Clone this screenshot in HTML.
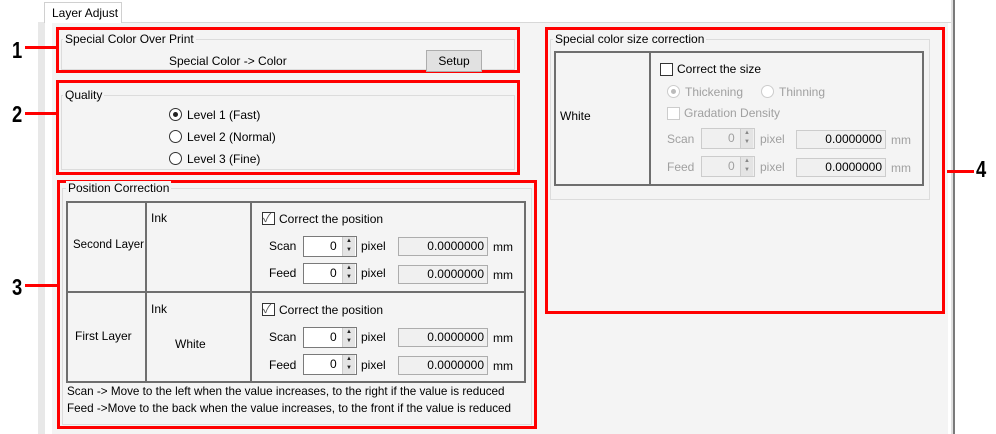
<!DOCTYPE html>
<html><head><style>
*{margin:0;padding:0;box-sizing:border-box}
body{width:996px;height:434px;background:#fff;position:relative;overflow:hidden;font-family:"Liberation Sans","Noto Sans CJK JP",sans-serif;font-size:12px;color:#000}
div,span{position:absolute}
.t{white-space:nowrap;line-height:14px}
.red{border:3px solid #f00}
.grp{border:1px solid #dcdcdc}
.gl{background:#f4f4f4;padding:0 2px}
.cell{border:2px solid #6e6e6e}
.num{font-size:23px;font-weight:bold;transform:scaleX(.8);transform-origin:left top;line-height:22px}
.ln{height:3px;background:#f00}
.cb{width:13px;height:13px;border:1px solid #333;background:#fff}
.rb{width:13px;height:13px;border:1px solid #333;border-radius:50%;background:#fff}
.in{height:21px;border:1px solid #7a7a7a;background:#fff}
.mmf{height:19px;border:1px solid #adadad;background:#f0f0f0;text-align:right;padding-right:3px;line-height:17px}
.sp{width:13px;height:19px;background:#e4e4e4;border-left:1px solid #ccc;font-size:6px;line-height:9px;text-align:center;color:#222}
.dis{color:#a0a0a0}
</style></head><body>
<div style="left:38px;top:22px;width:7px;height:412px;background:#e8e8e8"></div>
<div style="left:52px;top:22px;width:896px;height:412px;background:#f4f4f4"></div>
<div style="left:45px;top:22px;width:910px;height:1px;background:#d8d8d8"></div>
<div style="left:951px;top:0;width:2px;height:434px;background:#e0e0e0"></div>
<div style="left:953px;top:0;width:2px;height:434px;background:#7a7a7a"></div>
<div style="left:44px;top:2px;width:78px;height:21px;background:#fff;border:1px solid #d0d0d0;border-bottom:none"></div>
<div class="t" style="left:52px;top:6px">Layer Adjust</div>

<div class="num" style="left:12px;top:39px">1</div><div class="ln" style="left:25px;top:46px;width:31px"></div>
<div class="num" style="left:12px;top:103px">2</div><div class="ln" style="left:25px;top:112px;width:31px"></div>
<div class="num" style="left:12px;top:276px">3</div><div class="ln" style="left:25px;top:284px;width:32px"></div>
<div class="num" style="left:976px;top:158px">4</div><div class="ln" style="left:947px;top:170px;width:27px"></div>

<div class="red" style="left:56px;top:27px;width:464px;height:46px"></div>
<div class="grp" style="left:61px;top:39px;width:454px;height:31px"></div>
<div class="t gl" style="left:63px;top:32px">Special Color Over Print</div>
<div class="t" style="left:169px;top:54px">Special Color -&gt; Color</div>
<div style="left:426px;top:50px;width:56px;height:22px;background:#e1e1e1;border:1px solid #adadad;text-align:center;line-height:20px">Setup</div>

<div class="red" style="left:56px;top:80px;width:464px;height:95px"></div>
<div class="grp" style="left:61px;top:95px;width:454px;height:75px"></div>
<div class="t gl" style="left:63px;top:88px">Quality</div>
<div class="rb" style="left:169px;top:108px"></div><div style="left:173px;top:112px;width:5px;height:5px;border-radius:50%;background:#222"></div>
<div class="t" style="left:187px;top:108px">Level 1 (Fast)</div>
<div class="rb" style="left:169px;top:130px"></div><div class="t" style="left:187px;top:130px">Level 2 (Normal)</div>
<div class="rb" style="left:169px;top:152px"></div><div class="t" style="left:187px;top:152px">Level 3 (Fine)</div>

<div class="red" style="left:57px;top:180px;width:480px;height:249px"></div>
<div class="grp" style="left:62px;top:188px;width:470px;height:237px"></div>
<div class="t gl" style="left:66px;top:181px">Position Correction</div>
<div class="cell" style="left:66px;top:201px;width:81px;height:92px"></div>
<div class="cell" style="left:145px;top:201px;width:107px;height:92px"></div>
<div class="cell" style="left:250px;top:201px;width:276px;height:92px"></div>
<div class="cell" style="left:66px;top:291px;width:81px;height:92px"></div>
<div class="cell" style="left:145px;top:291px;width:107px;height:92px"></div>
<div class="cell" style="left:250px;top:291px;width:276px;height:92px"></div>
<div class="t" style="left:73px;top:238px;font-size:11.5px">Second Layer</div>
<div class="t" style="left:151px;top:211px">Ink</div>
<div class="t" style="left:75px;top:329px">First Layer</div>
<div class="t" style="left:151px;top:302px">Ink</div>
<div class="t" style="left:175px;top:337px">White</div>

<div class="cb" style="left:262px;top:212px"></div><div class="t" style="left:263px;top:211px;color:#555">✓</div>
<div class="t" style="left:279px;top:212px">Correct the position</div>
<div class="t" style="left:269px;top:239px">Scan</div>
<div class="in" style="left:303px;top:236px;width:54px"></div><div class="t" style="left:330px;top:239px">0</div><div class="sp" style="left:342px;top:237px">▲<br>▼</div>
<div class="t" style="left:361px;top:239px">pixel</div>
<div class="mmf" style="left:398px;top:237px;width:90px">0.0000000</div>
<div class="t" style="left:493px;top:240px">mm</div>
<div class="t" style="left:269px;top:266px">Feed</div>
<div class="in" style="left:303px;top:263px;width:54px"></div><div class="t" style="left:330px;top:266px">0</div><div class="sp" style="left:342px;top:264px">▲<br>▼</div>
<div class="t" style="left:361px;top:266px">pixel</div>
<div class="mmf" style="left:398px;top:265px;width:90px">0.0000000</div>
<div class="t" style="left:493px;top:268px">mm</div>

<div class="cb" style="left:262px;top:303px"></div><div class="t" style="left:263px;top:302px;color:#555">✓</div>
<div class="t" style="left:279px;top:303px">Correct the position</div>
<div class="t" style="left:269px;top:330px">Scan</div>
<div class="in" style="left:303px;top:327px;width:54px"></div><div class="t" style="left:330px;top:330px">0</div><div class="sp" style="left:342px;top:328px">▲<br>▼</div>
<div class="t" style="left:361px;top:330px">pixel</div>
<div class="mmf" style="left:398px;top:328px;width:90px">0.0000000</div>
<div class="t" style="left:493px;top:331px">mm</div>
<div class="t" style="left:269px;top:358px">Feed</div>
<div class="in" style="left:303px;top:354px;width:54px"></div><div class="t" style="left:330px;top:357px">0</div><div class="sp" style="left:342px;top:355px">▲<br>▼</div>
<div class="t" style="left:361px;top:358px">pixel</div>
<div class="mmf" style="left:398px;top:356px;width:90px">0.0000000</div>
<div class="t" style="left:493px;top:359px">mm</div>
<div class="t" style="left:67px;top:385px;font-size:11.7px">Scan -&gt; Move to the left when the value increases, to the right if the value is reduced</div>
<div class="t" style="left:67px;top:402px;font-size:11.7px">Feed -&gt;Move to the back when the value increases, to the front if the value is reduced</div>

<div class="red" style="left:545px;top:27px;width:400px;height:287px"></div>
<div class="grp" style="left:550px;top:39px;width:380px;height:161px"></div>
<div class="t gl" style="left:553px;top:32px">Special color size correction</div>
<div class="cell" style="left:554px;top:51px;width:97px;height:135px"></div>
<div class="cell" style="left:649px;top:51px;width:275px;height:135px"></div>
<div class="t" style="left:560px;top:109px">White</div>
<div class="cb" style="left:660px;top:63px"></div><div class="t" style="left:677px;top:62px">Correct the size</div>
<div class="rb" style="left:667px;top:85px;border-color:#ccc"></div><div style="left:671px;top:89px;width:5px;height:5px;border-radius:50%;background:#bbb"></div>
<div class="t dis" style="left:685px;top:85px">Thickening</div>
<div class="rb" style="left:761px;top:85px;border-color:#ccc"></div><div class="t dis" style="left:779px;top:85px">Thinning</div>
<div class="cb" style="left:667px;top:107px;border-color:#ccc"></div><div class="t dis" style="left:684px;top:106px">Gradation Density</div>
<div class="t dis" style="left:667px;top:132px">Scan</div>
<div class="in" style="left:701px;top:128px;width:54px;border-color:#ccc;background:#f0f0f0"></div><div class="t dis" style="left:728px;top:131px">0</div><div class="sp" style="left:740px;top:129px;color:#888">▲<br>▼</div>
<div class="t dis" style="left:760px;top:132px">pixel</div>
<div class="mmf" style="left:796px;top:130px;width:90px;border-color:#ccc">0.0000000</div>
<div class="t dis" style="left:891px;top:133px">mm</div>
<div class="t dis" style="left:667px;top:160px">Feed</div>
<div class="in" style="left:701px;top:156px;width:54px;border-color:#ccc;background:#f0f0f0"></div><div class="t dis" style="left:728px;top:159px">0</div><div class="sp" style="left:740px;top:157px;color:#888">▲<br>▼</div>
<div class="t dis" style="left:760px;top:160px">pixel</div>
<div class="mmf" style="left:796px;top:158px;width:90px;border-color:#ccc">0.0000000</div>
<div class="t dis" style="left:891px;top:161px">mm</div>
</body></html>
